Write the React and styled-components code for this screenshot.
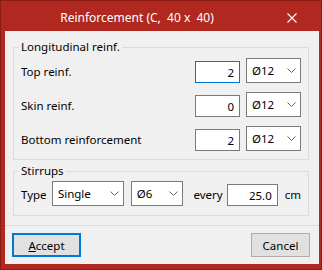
import React from 'react';
import styled, { createGlobalStyle } from 'styled-components';

const Global = createGlobalStyle`
  html, body { margin: 0; padding: 0; background: #fff; }
  body {
    font-family: "Noto Sans", "Liberation Sans", sans-serif;
    font-size: 11.5px;
    color: #000;
  }
  * { box-sizing: border-box; }
`;

const Window = styled.div`
  width: 322px;
  height: 270px;
  background: #b0281f;
  border: 1px solid #8a1c15;
  padding: 0 2px 5px 4px;
  display: flex;
  flex-direction: column;
`;

const TitleBar = styled.div`
  height: 30px;
  display: flex;
  align-items: center;
  color: #fff;
`;

const Title = styled.div`
  flex: 1;
  text-align: center;
  font-size: 12px;
  padding-top: 2px;
  white-space: pre;
`;

const CloseBox = styled.div`
  width: 46px;
  height: 30px;
  margin-right: 4px;
  display: flex;
  align-items: center;
  justify-content: center;
  padding-top: 3px;
`;

const Client = styled.div`
  flex: 1;
  background: #f0f0f0;
  display: flex;
  flex-direction: column;
`;

const Content = styled.div`
  padding: 8px 10px 9px 8px;
  display: flex;
  flex-direction: column;
  gap: 3px;
`;

const Group = styled.fieldset`
  margin: 0;
  border: 1px solid #dcdcdc;
  padding: ${p => p.$pt}px 7px ${p => p.$pb}px 7px;
  display: flex;
  flex-direction: column;
  gap: 9px;
  min-width: 0;
`;

const Legend = styled.legend`
  padding: 0 2px;
  margin-left: -2px;
  line-height: 16px;
`;

const GridRow = styled.div`
  display: grid;
  grid-template-columns: 1fr 45px 55px;
  column-gap: 6px;
  align-items: end;
  height: 25px;
`;

const Label = styled.span`
  line-height: 22px;
  white-space: nowrap;
  margin-left: ${p => p.$ml || 0}px;
  width: ${p => (p.$w ? p.$w + 'px' : 'auto')};
`;

const NumInput = styled.input`
  width: ${p => p.$w}px;
  height: 22px;
  margin: 0 0 0 ${p => p.$ml || 0}px;
  padding: 0 5px 0 2px;
  border: 1px solid ${p => (p.$focused ? '#0078d7' : '#7a7a7a')};
  background: #fff;
  font: inherit;
  color: #000;
  text-align: right;
  outline: none;
`;

const Combo = styled.div`
  width: ${p => p.$w}px;
  height: 25px;
  margin-left: ${p => p.$ml || 0}px;
  border: 1px solid #7a7a7a;
  background: #fff;
  display: flex;
  align-items: center;
  justify-content: space-between;
  padding: 0 4px 0 5px;
`;

const FlexRow = styled.div`
  display: flex;
  align-items: flex-end;
  height: 25px;
`;

const ButtonBar = styled.div`
  margin-top: auto;
  border-top: 1px solid #dadada;
  padding: 7px 9px 7px 7px;
  display: flex;
  justify-content: space-between;
`;

const Button = styled.button`
  width: ${p => p.$w}px;
  height: 24px;
  margin: 0;
  padding: 0;
  background: #e1e1e1;
  border: ${p => (p.$default ? '2px solid #0078d7' : '1px solid #adadad')};
  font: inherit;
  color: #000;
  display: flex;
  align-items: center;
  justify-content: center;
`;

const Chevron = () => (
  <svg width="9" height="5" viewBox="0 0 9 5">
    <polyline points="0.5,0.5 4.5,4.5 8.5,0.5" fill="none" stroke="#606060" strokeWidth="1" />
  </svg>
);

const CloseIcon = () => (
  <svg width="10" height="10" viewBox="0 0 10 10">
    <path d="M0.5 0.5 L9.5 9.5 M9.5 0.5 L0.5 9.5" stroke="#fff" strokeWidth="1.1" fill="none" />
  </svg>
);

const Select = ({ value, w, ml }) => (
  <Combo $w={w} $ml={ml}>
    <span>{value}</span>
    <Chevron />
  </Combo>
);

const rows = [
  { label: 'Top reinf.', value: '2', focused: true },
  { label: 'Skin reinf.', value: '0' },
  { label: 'Bottom reinforcement', value: '2' },
];

export default function App() {
  return (
    <>
      <Global />
      <Window>
        <TitleBar>
          <Title>{'Reinforcement (C,  40 x  40)'}</Title>
          <CloseBox>
            <CloseIcon />
          </CloseBox>
        </TitleBar>
        <Client>
          <Content>
            <Group $pt={3} $pb={8}>
              <Legend>Longitudinal reinf.</Legend>
              {rows.map(r => (
                <GridRow key={r.label}>
                  <Label>{r.label}</Label>
                  <NumInput $w={45} $focused={r.focused} value={r.value} readOnly />
                  <Select value="Ø12" w={55} />
                </GridRow>
              ))}
            </Group>
            <Group $pt={2} $pb={9}>
              <Legend>Stirrups</Legend>
              <FlexRow>
                <Label $w={31}>Type</Label>
                <Select value="Single" w={72} />
                <Select value="Ø6" w={52} ml={7} />
                <Label $ml={11}>every</Label>
                <NumInput $w={51} $ml={4} value="25.0" readOnly />
                <Label $ml={7}>cm</Label>
              </FlexRow>
            </Group>
          </Content>
          <ButtonBar>
            <Button $w={69} $default>
              <span><u>A</u>ccept</span>
            </Button>
            <Button $w={59}>Cancel</Button>
          </ButtonBar>
        </Client>
      </Window>
    </>
  );
}
